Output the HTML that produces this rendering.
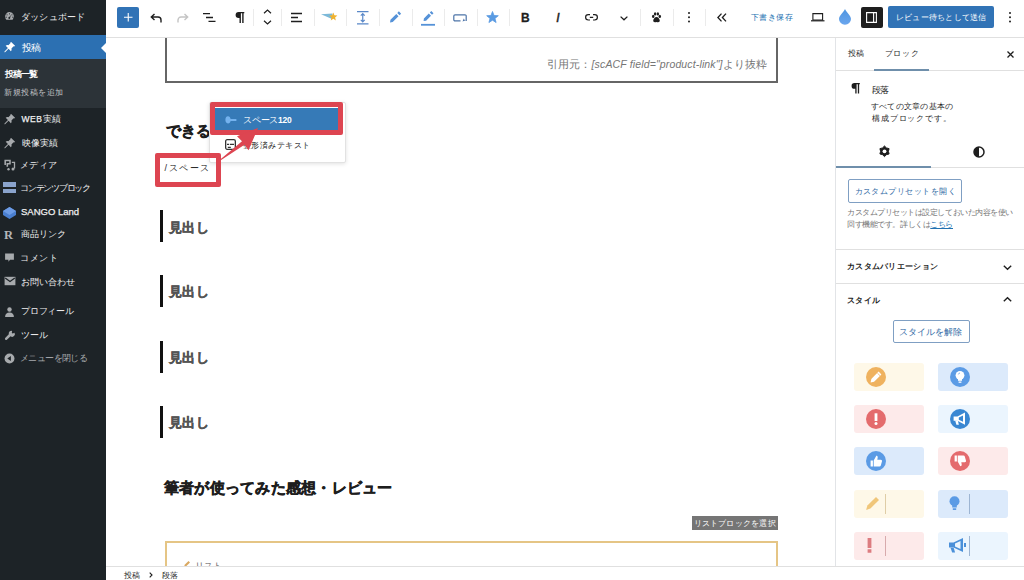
<!DOCTYPE html>
<html><head><meta charset="utf-8">
<style>
*{box-sizing:border-box;margin:0;padding:0}
html,body{width:1024px;height:580px;overflow:hidden;background:#fff;font-family:"Liberation Sans",sans-serif;position:relative}
.a{position:absolute}
.t{position:absolute;white-space:nowrap;line-height:10px;height:10px}
.j{font-size:1.333em;line-height:0;vertical-align:-0.08em;font-style:normal;-webkit-text-stroke:.1px currentColor}
.mi .j,.jm .j{-webkit-text-stroke:.3px currentColor}
.jb .j{-webkit-text-stroke:.9px currentColor}
.mi{position:absolute;left:22px;font-size:8.5px;color:#f0f0f1;white-space:nowrap;line-height:10px;height:10px;-webkit-text-stroke:.25px currentColor}
svg{position:absolute;overflow:visible}
.sep{position:absolute;top:8.5px;width:1px;height:17.5px;background:#ebebeb}
.tile{position:absolute;width:70px;height:28px;border-radius:3px}
.circ{position:absolute;width:20px;height:20px;border-radius:50%;top:4px;left:12px}
.dv{position:absolute;left:31px;top:4px;width:1px;height:20px}
.cjk .j{font-size:1em;vertical-align:0;-webkit-text-stroke:0}
.cjk .t,.cjk .mi{letter-spacing:0 !important}
.cjk .jb .j{-webkit-text-stroke:.5px currentColor}
</style><style id="cjkfix">.cjk #t2{left:21.0px !important;top:11.5px !important;letter-spacing:0.17px !important}.cjk #t3{left:22.0px !important;top:43.0px !important;letter-spacing:-1.40px !important}.cjk #t4{left:5.0px !important;top:68.5px !important;letter-spacing:-0.97px !important}.cjk #t5{left:4.0px !important;top:87.5px !important;letter-spacing:0.50px !important}.cjk #t6{left:21.5px !important;top:114.0px !important;letter-spacing:0.57px !important}.cjk #t7{left:22.0px !important;top:138.0px !important;letter-spacing:0.00px !important}.cjk #t8{left:20.0px !important;top:159.5px !important;letter-spacing:0.43px !important}.cjk #t9{left:20.0px !important;top:182.5px !important;letter-spacing:-1.24px !important}.cjk #t10{left:21.0px !important;top:207.0px !important;letter-spacing:0.00px !important}.cjk #t11{left:21.0px !important;top:229.0px !important;letter-spacing:0.00px !important}.cjk #t12{left:20.0px !important;top:253.0px !important;letter-spacing:0.53px !important}.cjk #t13{left:21.0px !important;top:276.5px !important;letter-spacing:0.00px !important}.cjk #t14{left:21.0px !important;top:306.0px !important;letter-spacing:-0.24px !important}.cjk #t15{left:21.0px !important;top:329.5px !important;letter-spacing:0.00px !important}.cjk #t16{left:20.0px !important;top:352.5px !important;letter-spacing:-0.61px !important}.cjk #t20{left:751.0px !important;top:13.0px !important;letter-spacing:0.45px !important}.cjk #t21{left:896.0px !important;top:13.0px !important;letter-spacing:0.22px !important}.cjk #t22{left:547.0px !important;top:58.5px !important;letter-spacing:0.14px !important}.cjk #t23{left:165.5px !important;top:123.0px !important;letter-spacing:0.00px !important}.cjk #t24{left:164.5px !important;top:163.0px !important;letter-spacing:1.62px !important}.cjk #t25{left:243.0px !important;top:115.0px !important;letter-spacing:-0.23px !important}.cjk #t26{left:242.8px !important;top:140.5px !important;letter-spacing:0.46px !important}.cjk #t27{left:168.5px !important;top:221.5px !important;letter-spacing:0.60px !important}.cjk #t28{left:168.5px !important;top:286.0px !important;letter-spacing:0.60px !important}.cjk #t29{left:168.5px !important;top:352.0px !important;letter-spacing:0.60px !important}.cjk #t30{left:168.5px !important;top:417.0px !important;letter-spacing:0.60px !important}.cjk #t31{left:164.0px !important;top:480.0px !important;letter-spacing:0.23px !important}.cjk #t32{left:693.5px !important;top:519.0px !important;letter-spacing:0.23px !important}.cjk #t34{left:848.0px !important;top:49.0px !important;letter-spacing:0.00px !important}.cjk #t35{left:884.5px !important;top:48.5px !important;letter-spacing:0.77px !important}.cjk #t37{left:872.0px !important;top:84.5px !important;letter-spacing:-1.20px !important}.cjk #t38{left:871.0px !important;top:102.0px !important;letter-spacing:0.22px !important}.cjk #t39{left:872.0px !important;top:113.5px !important;letter-spacing:0.85px !important}.cjk #t40{left:854.5px !important;top:186.5px !important;letter-spacing:0.46px !important}.cjk #t41{left:847.0px !important;top:208.0px !important;letter-spacing:-0.46px !important}.cjk #t42{left:847.0px !important;top:220.0px !important;letter-spacing:-0.43px !important}.cjk #t43{left:847.0px !important;top:262.0px !important;letter-spacing:0.29px !important}.cjk #t44{left:847.0px !important;top:295.5px !important;letter-spacing:0.33px !important}.cjk #t45{left:899.0px !important;top:326.5px !important;letter-spacing:0.00px !important}.cjk #t46{left:124.0px !important;top:569.5px !important;letter-spacing:0.00px !important}.cjk #t47{left:162.0px !important;top:569.5px !important;letter-spacing:0.00px !important}</style></head><body>

<!-- ============ left admin sidebar ============ -->
<div class="a" style="left:0;top:0;width:106px;height:580px;background:#1d2327"></div>
<div class="a" style="left:0;top:35px;width:106px;height:24px;background:#2c70b2"></div>
<div class="a" style="left:100.5px;top:42.7px;width:0;height:0;border-top:5.8px solid transparent;border-bottom:5.8px solid transparent;border-right:5.5px solid #fff"></div>
<div class="a" style="left:0;top:59px;width:106px;height:49px;background:#2c3338"></div>

<!-- sidebar icons -->
<svg style="left:4px;top:11px" width="11" height="11" viewBox="0 0 20 20"><path fill="#a7aaad" d="M10 2a8 8 0 0 0-8 8c0 2.2.9 4.2 2.3 5.7h11.4A8 8 0 0 0 10 2zm0 2.2a1 1 0 1 1 0 2 1 1 0 0 1 0-2zM5.5 6a1 1 0 1 1 0 2 1 1 0 0 1 0-2zm9 0a1 1 0 1 1 0 2 1 1 0 0 1 0-2zM4 10.2a1 1 0 1 1 0 2 1 1 0 0 1 0-2zm12 0a1 1 0 1 1 0 2 1 1 0 0 1 0-2zM13.3 6.6l-2.2 4.9a1.8 1.8 0 1 1-1.6-.7z"/></svg>
<svg style="left:3px;top:41px" width="13" height="13" viewBox="0 0 20 20"><path fill="#fff" d="M12.6 1.5l5.9 5.9-1.2 1.2-1-.5-3.3 3.3c.5 1.5.2 3.1-.9 4.2L8.6 12l-5.4 5.4-1-.1.1-1 5.3-5.4-3.5-3.5c1.1-1.1 2.8-1.4 4.2-.9l3.3-3.3-.5-1z"/></svg>
<svg style="left:3px;top:112.5px" width="13" height="13" viewBox="0 0 20 20"><path fill="#a7aaad" d="M12.6 1.5l5.9 5.9-1.2 1.2-1-.5-3.3 3.3c.5 1.5.2 3.1-.9 4.2L8.6 12l-5.4 5.4-1-.1.1-1 5.3-5.4-3.5-3.5c1.1-1.1 2.8-1.4 4.2-.9l3.3-3.3-.5-1z"/></svg>
<svg style="left:3px;top:136.5px" width="13" height="13" viewBox="0 0 20 20"><path fill="#a7aaad" d="M12.6 1.5l5.9 5.9-1.2 1.2-1-.5-3.3 3.3c.5 1.5.2 3.1-.9 4.2L8.6 12l-5.4 5.4-1-.1.1-1 5.3-5.4-3.5-3.5c1.1-1.1 2.8-1.4 4.2-.9l3.3-3.3-.5-1z"/></svg>
<svg style="left:3.5px;top:159px" width="12" height="12" viewBox="0 0 20 20"><path fill="none" stroke="#a7aaad" stroke-width="2.6" d="M2 10V2.5h8V8H5.5v5"/><path fill="none" stroke="#a7aaad" stroke-width="2.2" d="M13 5.5h4.5V16"/><circle cx="15" cy="16.5" r="2.5" fill="#a7aaad"/><circle cx="7.5" cy="17" r="2" fill="#a7aaad"/></svg>
<div class="a" style="left:3px;top:182px;width:13px;height:4.5px;background:#8aa3cc"></div>
<div class="a" style="left:3px;top:188.5px;width:13px;height:4.5px;background:#8aa3cc"></div>
<svg style="left:3px;top:207px" width="13" height="12" viewBox="0 0 13 12"><path fill="#4a7fd0" d="M6.5 0L13 4v4l-6.5 4L0 8V4z"/><path fill="#6d9ce6" d="M6.5 0L13 4 6.5 8 0 4z"/></svg>
<div id="t1" class="t" style="left:4px;top:230px;font-size:12.5px;font-weight:bold;color:#b4b6b9;font-family:'Liberation Serif',serif;line-height:10px;height:10px">R</div>
<svg style="left:4px;top:252px" width="11" height="12" viewBox="0 0 20 20"><path fill="#a7aaad" d="M2 2h16v11h-7l-3 4v-4H2z"/></svg>
<svg style="left:4px;top:276px" width="12" height="10" viewBox="0 0 20 16"><path fill="#a7aaad" d="M1 1h18v14H1z"/><path fill="none" stroke="#1d2327" stroke-width="2" d="M2 3l8 6 8-6"/></svg>
<svg style="left:4px;top:306px" width="11" height="12" viewBox="0 0 20 20"><circle cx="10" cy="5.5" r="4" fill="#a7aaad"/><path fill="#a7aaad" d="M2 19c0-5 3-8 8-8s8 3 8 8z"/></svg>
<svg style="left:4px;top:330px" width="12" height="12" viewBox="0 0 20 20"><path fill="#a7aaad" d="M17.5 4.5l-3 1.5-1.5-1 .5-3.5A4.5 4.5 0 0 0 8 7l-6 6.5a2 2 0 0 0 2.8 2.8L11 10.5a4.5 4.5 0 0 0 6.5-6z"/></svg>
<svg style="left:4px;top:353px" width="11" height="11" viewBox="0 0 20 20"><circle cx="10" cy="10" r="9" fill="#a7aaad"/><path fill="#1d2327" d="M12.5 5.5v9L6 10z"/></svg>

<div id="t2" class="mi" style="left:20.5px;top:11.5px;font-size:8.9px"><span class="j">ダッシュボード</span></div>
<div id="t3" class="mi" style="left:20.5px;top:44px;color:#fff;font-size:9.5px"><span class="j">投稿</span></div>
<div id="t4" class="mi" style="left:4px;top:68px;letter-spacing:1.03px;font-weight:bold;color:#fff;font-size:8.6px"><span class="j">投稿一覧</span></div>
<div id="t5" class="mi" style="left:4px;top:88px;letter-spacing:0.5px;color:#c3c4c7;font-size:8.1px"><span class="j">新規投稿を追加</span></div>
<div id="t6" class="mi" style="left:22px;top:114px;letter-spacing:0.57px;">WEB<span class="j">実績</span></div>
<div id="t7" class="mi" style="left:20.5px;top:138.5px;letter-spacing:0.66px;font-size:9px"><span class="j">映像実績</span></div>
<div id="t8" class="mi" style="left:20.5px;top:160.5px;font-size:8.9px"><span class="j">メディア</span></div>
<div id="t9" class="mi" style="left:20.5px;top:182px;letter-spacing:-0.36px;"><span class="j">コンテンツブロック</span></div>
<div id="t10" class="mi" style="left:20.5px;top:207px;letter-spacing:-0.52px;font-size:9.5px">SANGO Land</div>
<div id="t11" class="mi" style="left:21px;top:229.5px;font-size:8.8px"><span class="j">商品リンク</span></div>
<div id="t12" class="mi" style="left:21px;top:254px;font-size:8.7px"><span class="j">コメント</span></div>
<div id="t13" class="mi" style="left:21px;top:277px;font-size:8.8px"><span class="j">お問い合わせ</span></div>
<div id="t14" class="mi" style="left:21px;top:307px;font-size:8.8px"><span class="j">プロフィール</span></div>
<div id="t15" class="mi" style="left:21px;top:330.5px;font-size:9px"><span class="j">ツール</span></div>
<div id="t16" class="mi" style="left:21px;top:353.5px;letter-spacing:0.39px;color:#a7aaad"><span class="j">メニューを閉じる</span></div>

<!-- ============ top toolbar ============ -->
<div class="a" style="left:106px;top:0;width:918px;height:38px;background:#fff;border-bottom:1px solid #e0e0e0"></div>
<div class="a" style="left:117px;top:7px;width:22px;height:21px;background:#3173b6;border-radius:2px"></div>
<svg style="left:123.5px;top:13px" width="8.5" height="8.5" viewBox="0 0 8.5 8.5"><path stroke="#fff" stroke-width="1.1" d="M4.25 0v8.5M0 4.25h8.5"/></svg>
<svg style="left:150px;top:13px" width="12" height="10" viewBox="0 0 12 10"><path fill="none" stroke="#1e1e1e" stroke-width="1.4" d="M4.5 1L1.3 4l3.2 3M1.5 4H8a3 3 0 0 1 3 3v2.5"/></svg>
<svg style="left:177px;top:13px" width="12" height="10" viewBox="0 0 12 10"><path fill="none" stroke="#c4c4c4" stroke-width="1.4" d="M7.5 1l3.2 3-3.2 3M10.5 4H4a3 3 0 0 0-3 3v2.5"/></svg>
<svg style="left:203px;top:12px" width="13" height="11" viewBox="0 0 13 11"><path stroke="#1e1e1e" stroke-width="1.3" d="M0 1.6h7M3 5.5h7M5.5 9.4h7"/></svg>
<svg style="left:234.5px;top:11.5px" width="9.5" height="11" viewBox="0 0 9.5 11"><path fill="#1e1e1e" d="M9.3 0H3.6a3 3 0 0 0 0 6h.9v5h1.4V1.3h1.3V11h1.4V1.3h.7z"/></svg>
<div class="sep" style="left:253px"></div>
<svg style="left:262.5px;top:9px" width="9" height="16" viewBox="0 0 9 16"><path fill="none" stroke="#1e1e1e" stroke-width="1.2" d="M1 4.2L4.5 1 8 4.2M1 11.8L4.5 15 8 11.8"/></svg>
<div class="sep" style="left:281px"></div>
<svg style="left:291px;top:12px" width="11" height="11" viewBox="0 0 11 11"><path stroke="#1e1e1e" stroke-width="1.4" d="M0 1.5h11M0 5.5h7M0 9.5h11"/></svg>
<div class="sep" style="left:314px"></div>
<svg style="left:320px;top:12px" width="18" height="10" viewBox="0 0 18 10"><path fill="#7cb9d9" d="M1 2.3L12.5 1.6 12 7z"/><path fill="#f0b22e" d="M13.30 0.60 L14.42 3.36 L17.39 3.57 L15.11 5.49 L15.83 8.38 L13.30 6.80 L10.77 8.38 L11.49 5.49 L9.21 3.57 L12.18 3.36z"/></svg>
<div class="sep" style="left:346px"></div>
<svg style="left:356.5px;top:10.5px" width="11.5" height="13.5" viewBox="0 0 11.5 13.5"><path fill="none" stroke="#5a88c8" stroke-width="1.2" d="M0 .6h11.5M0 12.9h11.5M5.75 2.5v8.5M3.8 4.6l1.95-2 1.95 2M3.8 8.9l1.95 2 1.95-2"/></svg>
<div class="sep" style="left:379px"></div>
<svg style="left:388.5px;top:11px" width="12.5" height="12.5" viewBox="0 0 12.5 12.5"><path fill="#5592d8" d="M1.04 11.46L3.73 11.03L9.53 5.23L7.27 2.97L1.47 8.77zM10.53 4.23L12.13 2.63L9.87 0.37L8.27 1.97z"/></svg>
<div class="sep" style="left:412px"></div>
<svg style="left:420.5px;top:10.5px" width="14" height="15" viewBox="0 0 14 15"><path fill="#5592d8" d="M2.59 10.01L5.10 9.70L10.00 4.80L7.80 2.60L2.90 7.50zM11.00 3.80L12.50 2.30L10.30 0.10L8.80 1.60z"/><path stroke="#5592d8" stroke-width="1.8" d="M0 13.8h14"/></svg>
<div class="sep" style="left:444px"></div>
<svg style="left:453px;top:13.5px" width="14" height="8" viewBox="0 0 14 8"><path fill="none" stroke="#4d74a8" stroke-width="1.2" d="M7.5 6.9H2a1.2 1.2 0 0 1-1.2-1.2V2A1.2 1.2 0 0 1 2 .8h10A1.2 1.2 0 0 1 13.2 2v4.9"/><path fill="#4d74a8" d="M9.5 7.5l1.3-3 .8 1.6 1.2.2z"/></svg>
<div class="sep" style="left:477px"></div>
<svg style="left:486px;top:10.5px" width="13" height="12.5" viewBox="0 0 13 12.5"><path fill="#5a9be2" stroke="#5a9be2" stroke-width=".8" stroke-linejoin="round" d="M6.50 0.50 L8.03 4.50 L12.30 4.71 L8.97 7.40 L10.09 11.54 L6.50 9.20 L2.91 11.54 L4.03 7.40 L0.70 4.71 L4.97 4.50z"/></svg>
<div class="sep" style="left:509px"></div>
<div id="t18" class="t" style="left:521px;top:12px;font-size:12px;font-weight:bold;color:#1e1e1e;line-height:12px;height:12px;-webkit-text-stroke:.3px #1e1e1e">B</div>
<div id="t19" class="t" style="left:556.3px;top:12px;font-size:12px;font-style:italic;color:#1e1e1e;line-height:12px;height:12px;-webkit-text-stroke:.5px #1e1e1e">I</div>
<svg style="left:584.5px;top:14.3px" width="13" height="6.6" viewBox="0 0 13 6.6"><path fill="none" stroke="#1e1e1e" stroke-width="1.2" d="M5 .6H3.3a2.7 2.7 0 0 0 0 5.4H5M8 .6h1.7a2.7 2.7 0 0 1 0 5.4H8M4.8 3.3h3.4"/></svg>
<svg style="left:619.8px;top:16px" width="8" height="4.6" viewBox="0 0 8 4.6"><path fill="none" stroke="#1e1e1e" stroke-width="1.3" d="M.6.6L4 3.8 7.4.6"/></svg>
<div class="sep" style="left:640px"></div>
<svg style="left:651px;top:12px" width="11" height="11" viewBox="0 0 20 20"><ellipse cx="4" cy="8" rx="2.2" ry="2.8" fill="#1e1e1e"/><ellipse cx="16" cy="8" rx="2.2" ry="2.8" fill="#1e1e1e"/><ellipse cx="7.5" cy="3.5" rx="2.2" ry="3" fill="#1e1e1e"/><ellipse cx="12.5" cy="3.5" rx="2.2" ry="3" fill="#1e1e1e"/><path fill="#1e1e1e" d="M10 9c-3 0-6 4-6 7 0 2.5 2.5 3 6 2 3.5 1 6 .5 6-2 0-3-3-7-6-7z"/></svg>
<div class="sep" style="left:673px"></div>
<svg style="left:687.2px;top:12px" width="4" height="12" viewBox="0 0 4 12"><circle cx="2" cy="1" r="1" fill="#1e1e1e"/><circle cx="2" cy="5.2" r="1" fill="#1e1e1e"/><circle cx="2" cy="9.5" r="1" fill="#1e1e1e"/></svg>
<div class="sep" style="left:705px"></div>
<svg style="left:716.5px;top:13px" width="9.5" height="9" viewBox="0 0 9.5 9"><path fill="none" stroke="#1e1e1e" stroke-width="1.3" d="M4.5.6L.9 4.5l3.6 3.9M9 .6L5.4 4.5 9 8.4"/></svg>
<div id="t20" class="t" style="left:751px;top:13px;letter-spacing:0.45px;font-size:7.8px;color:#2271b1"><span class="j">下書き保存</span></div>
<svg style="left:810.5px;top:12.8px" width="13.5" height="8.5" viewBox="0 0 13.5 8.5"><path fill="none" stroke="#1e1e1e" stroke-width="1.1" d="M1.9.6h9.7v6.4H1.9z"/><path stroke="#1e1e1e" stroke-width="1.2" d="M0 7.8h13.5"/></svg>
<svg style="left:838.6px;top:9.4px" width="12" height="15.8" viewBox="0 0 12 15.8"><defs><linearGradient id="dg" x1="0" y1="0" x2="0" y2="1"><stop offset="0" stop-color="#4f95e0"/><stop offset="1" stop-color="#6aa6ee"/></linearGradient></defs><path fill="url(#dg)" d="M6 0C4.6 3.5 0 6.8 0 10a6 5.8 0 0 0 12 0C12 6.8 7.4 3.5 6 0z"/></svg>
<div class="a" style="left:861px;top:6.5px;width:21.5px;height:21px;background:#1e1e1e;border-radius:2px"></div>
<svg style="left:866px;top:12px" width="11" height="11" viewBox="0 0 11 11"><path fill="none" stroke="#fff" stroke-width="1.1" d="M.6.6h9.8v9.8H.6zM7.6.6v9.8"/></svg>
<div class="a" style="left:888px;top:6px;width:106px;height:22px;background:#3173b6;border-radius:2px"></div>
<div id="t21" class="t jm" style="left:896px;top:13.5px;letter-spacing:0.22px;font-size:8px;color:#fff"><span class="j">レビュー待ちとして送信</span></div>
<svg style="left:1008.3px;top:12px" width="4" height="12" viewBox="0 0 4 12"><circle cx="2" cy="1" r="1" fill="#1e1e1e"/><circle cx="2" cy="5.2" r="1" fill="#1e1e1e"/><circle cx="2" cy="9.5" r="1" fill="#1e1e1e"/></svg>

<!-- ============ canvas ============ -->
<div class="a" style="left:164.5px;top:38px;width:613px;height:45px;border:2px solid #666;border-top:none"></div>
<div id="t22" class="t" style="left:547px;top:58.5px;font-size:10.5px;font-style:italic;color:#757575"><span class="j">引用元：</span>[scACF field="product-link"]<span class="j">より抜粋</span></div>

<div id="t23" class="t jb" style="left:163.5px;top:124px;letter-spacing:1px;font-size:15px;font-weight:bold;color:#1e1e1e;height:15px;line-height:15px"><span class="j">できる</span></div>
<div id="t24" class="t" style="left:165px;top:163px;letter-spacing:1.38px;font-size:9px;color:#1e1e1e">/<span class="j">スペース</span></div>

<!-- popup -->
<div class="a" style="left:209px;top:102px;width:137px;height:61px;background:#fff;border:1px solid #e2e2e2;border-radius:2px;box-shadow:0 1px 4px rgba(0,0,0,.12)"></div>
<div class="a" style="left:214px;top:108px;width:124px;height:23px;background:#367ab7"></div>
<div class="a" style="left:210px;top:102px;width:133px;height:33px;border:5px solid #dd4551;border-radius:2px"></div>
<svg style="left:224.5px;top:116px" width="12" height="8" viewBox="0 0 12 8"><path fill="#74b2ee" d="M3 .2C1.2.2.4 1.8.4 3.8s.8 3.6 2.6 3.6c1.5 0 2.3-1 2.6-2.5h5.8V3H5.6C5.3 1.4 4.5.2 3 .2z"/></svg>
<div id="t25" class="t jm" style="left:243.5px;top:115px;font-size:8.5px;color:#fff"><span class="j">スペース</span><b>120</b></div>
<svg style="left:225px;top:139px" width="11" height="11" viewBox="0 0 11 11"><rect x=".65" y=".65" width="9.7" height="9.7" rx="1.5" fill="none" stroke="#333" stroke-width="1.3"/><path stroke="#333" stroke-width="1.1" d="M2 5.4h2.2M5 5.4h4M2.8 8.4h3"/></svg>
<div id="t26" class="t" style="left:243px;top:141px;letter-spacing:0.32px;font-size:8px;color:#1e1e1e"><span class="j">整形済みテキスト</span></div>
<svg style="left:215px;top:125px" width="45" height="38" viewBox="0 0 45 38"><path fill="#dd4551" d="M5.5 34.3L27 16.2 22 11.3 43 3 33.5 25.3 29.5 19.8 6.2 35z"/></svg>

<div class="a" style="left:155px;top:153px;width:66px;height:34px;border:5px solid #dd4551;border-radius:2px"></div>
<!-- headings -->
<div class="a" style="left:160px;top:210px;width:3px;height:32px;background:#111"></div>
<div id="t27" class="t jb" style="left:168px;top:221.5px;letter-spacing:1.05px;font-size:13px;font-weight:bold;color:#555;height:12px;line-height:12px"><span class="j">見出し</span></div>
<div class="a" style="left:160px;top:275px;width:3px;height:32px;background:#111"></div>
<div id="t28" class="t jb" style="left:168px;top:287px;letter-spacing:1.05px;font-size:13px;font-weight:bold;color:#555;height:12px;line-height:12px"><span class="j">見出し</span></div>
<div class="a" style="left:160px;top:341px;width:3px;height:32px;background:#111"></div>
<div id="t29" class="t jb" style="left:168px;top:352.5px;letter-spacing:1.05px;font-size:13px;font-weight:bold;color:#555;height:12px;line-height:12px"><span class="j">見出し</span></div>
<div class="a" style="left:160px;top:406px;width:3px;height:32px;background:#111"></div>
<div id="t30" class="t jb" style="left:168px;top:418px;letter-spacing:1.05px;font-size:13px;font-weight:bold;color:#555;height:12px;line-height:12px"><span class="j">見出し</span></div>

<div id="t31" class="t jb" style="left:162px;top:480px;letter-spacing:0.44px;font-size:15px;font-weight:bold;color:#1e1e1e;height:15px;line-height:15px"><span class="j">筆者が使ってみた感想・レビュー</span></div>

<div class="a" style="left:692px;top:516px;width:86px;height:14px;background:#757575"></div>
<div id="t32" class="t" style="left:694px;top:519px;letter-spacing:0.12px;font-size:8px;color:#fff"><span class="j">リストブロックを選択</span></div>
<div class="a" style="left:165px;top:541px;width:613px;height:40px;border:2px solid #e5c585;border-bottom:none"></div>
<svg style="left:184px;top:561px" width="6" height="6" viewBox="0 0 6 6"><path fill="#d9a860" d="M4.5 0L6 1.5 2.2 5.3 0 6 .7 3.8z"/></svg>
<div id="t33" class="t" style="left:195px;top:561px;font-size:8.5px;color:#666"><span class="j">リスト</span></div>

<!-- ============ right sidebar ============ -->
<div class="a" style="left:835px;top:38px;width:1px;height:528px;background:#e2e4e7"></div>
<div id="t34" class="t" style="left:847px;top:50px;letter-spacing:1.2px;font-size:8.2px;color:#1e1e1e"><span class="j">投稿</span></div>
<div id="t35" class="t" style="left:885px;top:49.5px;letter-spacing:0.43px;font-size:7.8px;color:#1e1e1e"><span class="j">ブロック</span></div>
<svg style="left:1007px;top:51px" width="7" height="7" viewBox="0 0 7 7"><path stroke="#1e1e1e" stroke-width="1.3" d="M.5.5l6 6M6.5.5l-6 6"/></svg>
<div class="a" style="left:836px;top:70px;width:188px;height:1px;background:#e0e0e0"></div>
<div class="a" style="left:874px;top:69px;width:55px;height:2px;background:#6f8fab"></div>
<svg style="left:850.5px;top:83.3px" width="9" height="10.5" viewBox="0 0 9.5 11"><path fill="#1e1e1e" d="M9.3 0H3.6a3 3 0 0 0 0 6h.9v5h1.4V1.3h1.3V11h1.4V1.3h.7z"/></svg>
<div id="t37" class="t" style="left:871px;top:85px;letter-spacing:1.8px;font-size:8.5px;color:#1e1e1e"><span class="j">段落</span></div>
<div id="t38" class="t" style="left:871px;top:102.5px;letter-spacing:0.33px;font-size:8.1px;color:#1e1e1e"><span class="j">すべての文章の基本の</span></div>
<div id="t39" class="t" style="left:871px;top:114px;font-size:8.1px;color:#1e1e1e"><span class="j">構成ブロックです。</span></div>
<svg style="left:878.5px;top:145.8px" width="11" height="10.6" viewBox="0 0 11 10.6"><path fill="#1e1e1e" stroke="#1e1e1e" stroke-width="1" stroke-linejoin="round" d="M5.50 0.00 L7.45 1.92 L10.09 2.65 L9.40 5.30 L10.09 7.95 L7.45 8.68 L5.50 10.60 L3.55 8.68 L0.91 7.95 L1.60 5.30 L0.91 2.65 L3.55 1.92z"/><circle cx="5.5" cy="5.3" r="1.9" fill="#fff"/></svg>
<svg style="left:973px;top:146px" width="12" height="12" viewBox="0 0 12 12"><circle cx="6" cy="6" r="5" fill="none" stroke="#1e1e1e" stroke-width="1.5"/><path fill="#1e1e1e" d="M6 1a5 5 0 0 0 0 10z"/></svg>
<div class="a" style="left:836px;top:167px;width:188px;height:1px;background:#e0e0e0"></div>
<div class="a" style="left:836px;top:166px;width:95px;height:2px;background:#6f8fab"></div>
<div class="a" style="left:848px;top:179px;width:114px;height:24px;border:1px solid #7f9fc3;border-radius:2px"></div>
<div id="t40" class="t" style="left:855px;top:187px;letter-spacing:0.28px;font-size:8.1px;color:#2f6aa5"><span class="j">カスタムプリセットを開く</span></div>
<div id="t41" class="t" style="left:847px;top:208px;letter-spacing:-0.41px;font-size:7.5px;color:#757575"><span class="j">カスタムプリセットは設定しておいた内容を使い</span></div>
<div id="t42" class="t" style="left:847px;top:220.5px;letter-spacing:-0.43px;font-size:7.5px;color:#757575"><span class="j">回す機能です。詳しくは</span><span class="j" style="color:#2271b1;text-decoration:underline">こちら</span></div>
<div class="a" style="left:836px;top:249px;width:188px;height:1px;background:#e0e0e0"></div>
<div id="t43" class="t jm" style="left:847px;top:263px;letter-spacing:0.29px;font-size:8.1px;font-weight:bold;color:#1e1e1e"><span class="j">カスタムバリエーション</span></div>
<svg style="left:1003px;top:265px" width="9" height="5" viewBox="0 0 9 5"><path fill="none" stroke="#1e1e1e" stroke-width="1.4" d="M.8.8l3.7 3.4L8.2.8"/></svg>
<div class="a" style="left:836px;top:283px;width:188px;height:1px;background:#e0e0e0"></div>
<div id="t44" class="t jm" style="left:847px;top:296px;letter-spacing:0.67px;font-size:8.1px;font-weight:bold;color:#1e1e1e"><span class="j">スタイル</span></div>
<svg style="left:1003px;top:297px" width="9" height="5" viewBox="0 0 9 5"><path fill="none" stroke="#1e1e1e" stroke-width="1.4" d="M.8 4.2L4.5.8l3.7 3.4"/></svg>
<div class="a" style="left:893px;top:320px;width:77px;height:23px;border:1px solid #7f9fc3;border-radius:2px"></div>
<div id="t45" class="t" style="left:900px;top:327px;font-size:8.7px;color:#2f6aa5"><span class="j">スタイルを解除</span></div>

<!-- style tiles -->
<div class="tile" style="left:854px;top:363px;background:#fef8e8"><div class="circ" style="background:#efb25f"><svg style="left:0;top:0" width="20" height="20" viewBox="0 0 20 20"><path fill="#fff" d="M12.6 4.6l2.8 2.8-7.3 7.3-3.5.8.7-3.6z"/><path stroke="#efb25f" stroke-width=".8" d="M11.3 6l2.7 2.7"/></svg></div></div>
<div class="tile" style="left:938px;top:363px;background:#dceafb"><div class="circ" style="background:#5b9be5"><svg style="left:0;top:0" width="20" height="20" viewBox="0 0 20 20"><circle cx="10" cy="8.3" r="4.4" fill="#fff"/><path fill="#fff" d="M8 11.5h4v2.3H8z"/><path fill="#fff" d="M8.6 14.5h2.8v1.3H8.6z"/><path fill="none" stroke="#5b9be5" stroke-width=".7" d="M8.3 7.5a1.8 1.8 0 0 1 1.7-1.5"/></svg></div></div>
<div class="tile" style="left:854px;top:405px;background:#fdeaea"><div class="circ" style="background:#e46b6d"><svg style="left:0;top:0" width="20" height="20" viewBox="0 0 20 20"><path fill="#fff" d="M8.6 4.3h2.8v7.7H8.6z"/><circle cx="10" cy="14.6" r="1.5" fill="#fff"/></svg></div></div>
<div class="tile" style="left:938px;top:405px;background:#ebf5fe"><div class="circ" style="background:#3a87d2"><svg style="left:0;top:0" width="20" height="20" viewBox="0 0 20 20"><path fill="#fff" d="M3.6 7.4h3.8l7.6-4v12.4l-7.6-4H3.6z"/><path fill="#fff" d="M5.2 11.5h2.6l1.1 4.3H6.4z"/><path fill="#3a87d2" d="M8.8 8.6l4.2-2.1v6.3l-4.2-2z"/></svg></div></div>
<div class="tile" style="left:854px;top:447px;background:#dceafb"><div class="circ" style="background:#5b9be5"><svg style="left:0;top:0" width="20" height="20" viewBox="0 0 20 20"><path fill="#fff" d="M4.6 9.6h2.3v5.8H4.6zM7.7 15.4V9.5l2.6-4.8c.9 0 1.6.7 1.4 1.7l-.4 2.3h3.5c.9 0 1.4.8 1.2 1.5l-1.2 4.2c-.2.6-.7 1-1.3 1z"/></svg></div></div>
<div class="tile" style="left:938px;top:447px;background:#fdeaea"><div class="circ" style="background:#e46b6d"><svg style="left:0;top:0" width="20" height="20" viewBox="0 0 20 20"><g transform="matrix(1 0 0 -1 0 20)"><path fill="#fff" d="M4.6 9.6h2.3v5.8H4.6zM7.7 15.4V9.5l2.6-4.8c.9 0 1.6.7 1.4 1.7l-.4 2.3h3.5c.9 0 1.4.8 1.2 1.5l-1.2 4.2c-.2.6-.7 1-1.3 1z"/></g></svg></div></div>
<div class="tile" style="left:854px;top:490px;background:#fef8e8"><svg style="left:10px;top:6px" width="16" height="15" viewBox="0 0 16 15"><path fill="#f0c67a" d="M12 1l3 3-8.6 8.6-4.3 1.4L3.4 9.6z"/></svg><div class="dv" style="background:#dfcda6"></div></div>
<div class="tile" style="left:938px;top:490px;background:#dceafb"><svg style="left:11px;top:6px" width="11" height="15" viewBox="0 0 11 15"><circle cx="5.5" cy="5.3" r="5" fill="#5b9be5"/><path fill="#5b9be5" d="M3.2 9h4.6v2.6H3.2zM3.8 12.3h3.4v1.8H3.8z"/></svg><div class="dv" style="background:#9db5d3"></div></div>
<div class="tile" style="left:854px;top:532px;background:#fdeaea"><svg style="left:13px;top:6px" width="5" height="15" viewBox="0 0 5 15"><path fill="#dc7c80" d="M.6 0h3.8v10H.6zM.6 11.3h3.8v3.4H.6z"/></svg><div class="dv" style="background:#d8aaac"></div></div>
<div class="tile" style="left:938px;top:532px;background:#ebf5fe"><svg style="left:11px;top:6px" width="17" height="15" viewBox="0 0 17 15"><path fill="#4a90d9" d="M0 4.5h4.5L14 0v14L4.5 9.5H0z"/><path fill="#4a90d9" d="M1.5 9.8h3.2l1.4 4.6H3.2z"/><path fill="#ebf5fe" d="M6 5.6l5.5-2.6v8L6 8.4z"/><path fill="#4a90d9" d="M15 5h2v4h-2z"/></svg><div class="dv" style="background:#9db5d3"></div></div>

<!-- ============ bottom bar ============ -->
<div class="a" style="left:106px;top:566px;width:918px;height:14px;background:#fff;border-top:1px solid #e0e0e0"></div>
<div id="t46" class="t" style="left:123px;top:570px;letter-spacing:1.6px;font-size:8.3px;color:#1e1e1e"><span class="j">投稿</span></div>
<svg style="left:149px;top:572px" width="4" height="6" viewBox="0 0 4 6"><path fill="none" stroke="#1e1e1e" stroke-width="1.1" d="M.7.7L3 3 .7 5.3"/></svg>
<div id="t47" class="t" style="left:161.5px;top:570px;letter-spacing:1.5px;font-size:8.3px;color:#1e1e1e"><span class="j">段落</span></div>
<script>
(function(){try{var d=document.createElement('span');d.style.cssText='position:absolute;left:-9999px;top:0;font:100px "Liberation Sans",sans-serif;white-space:nowrap';d.textContent='\u6295';document.body.appendChild(d);var w1=d.getBoundingClientRect().width;d.textContent='\uDB3F\uDFFD';var w2=d.getBoundingClientRect().width;document.body.removeChild(d);if(Math.abs(w1-w2)>2)document.documentElement.className+=' cjk';}catch(e){}})();
</script>
</body></html>
